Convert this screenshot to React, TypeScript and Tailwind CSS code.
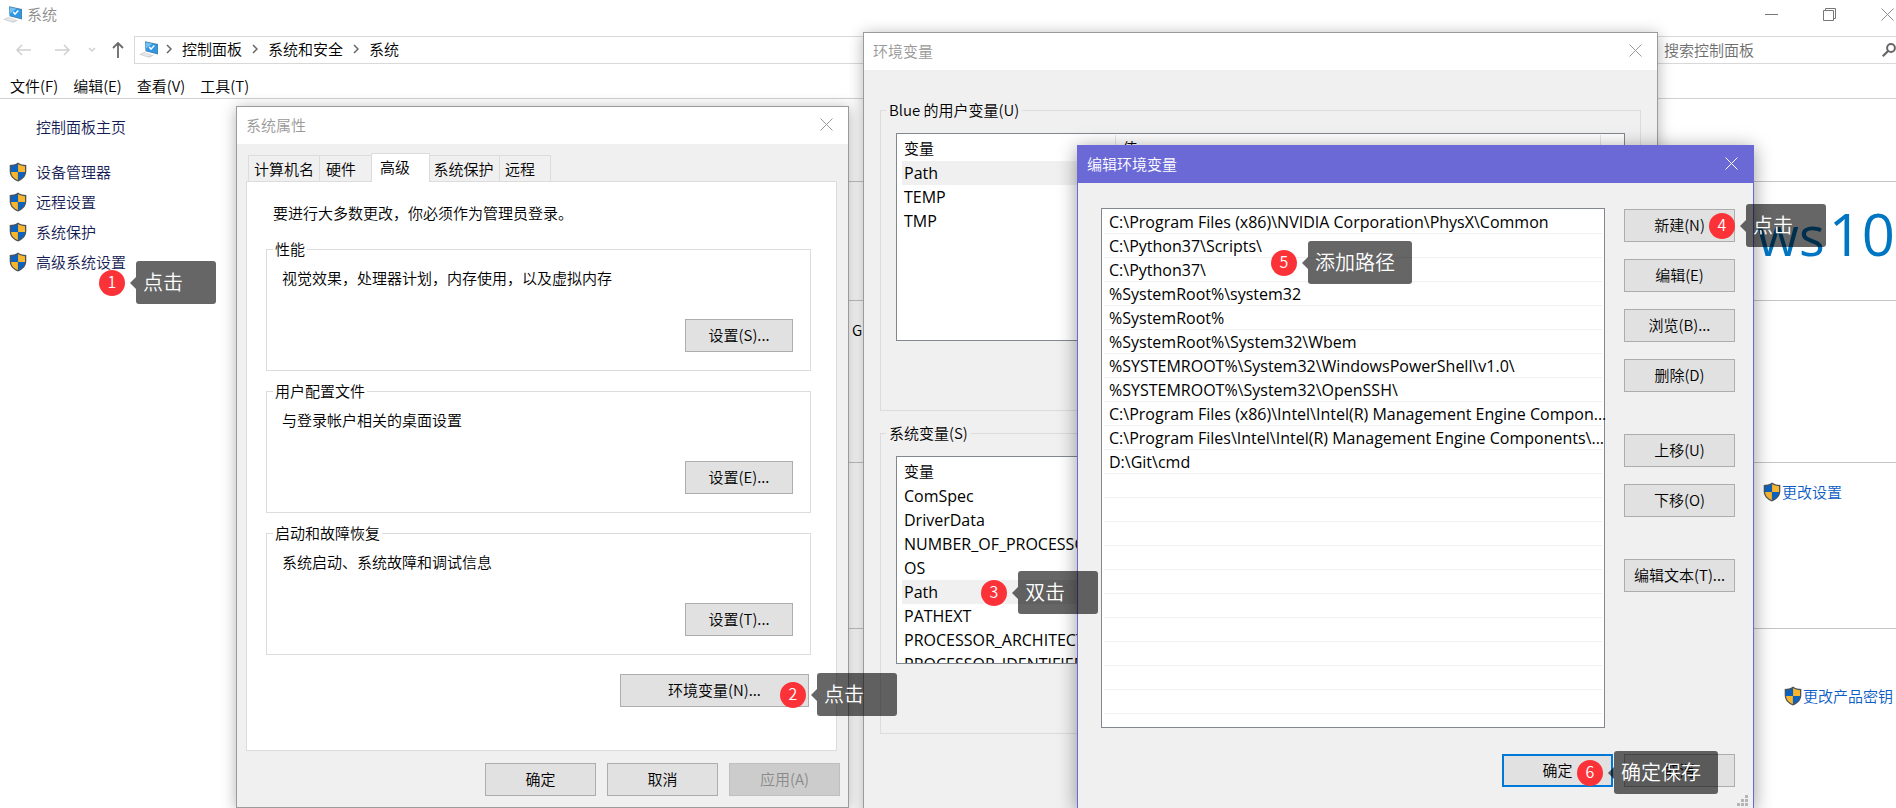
import { ReactNode } from "react";

const sideLinks = ["设备管理器", "远程设置", "系统保护", "高级系统设置"];
const menuItems = ["文件(F)", "编辑(E)", "查看(V)", "工具(T)"];
const crumbs = ["控制面板", "系统和安全", "系统"];

const groups = [
  { title: "性能", text: "视觉效果，处理器计划，内存使用，以及虚拟内存", button: "设置(S)..." },
  { title: "用户配置文件", text: "与登录帐户相关的桌面设置", button: "设置(E)..." },
  { title: "启动和故障恢复", text: "系统启动、系统故障和调试信息", button: "设置(T)..." },
];

const userVars = ["Path", "TEMP", "TMP"];
const systemVars = [
  "ComSpec",
  "DriverData",
  "NUMBER_OF_PROCESSORS",
  "OS",
  "Path",
  "PATHEXT",
  "PROCESSOR_ARCHITECTURE",
  "PROCESSOR_IDENTIFIER",
];

const paths = [
  "C:\\Program Files (x86)\\NVIDIA Corporation\\PhysX\\Common",
  "C:\\Python37\\Scripts\\",
  "C:\\Python37\\",
  "%SystemRoot%\\system32",
  "%SystemRoot%",
  "%SystemRoot%\\System32\\Wbem",
  "%SYSTEMROOT%\\System32\\WindowsPowerShell\\v1.0\\",
  "%SYSTEMROOT%\\System32\\OpenSSH\\",
  "C:\\Program Files (x86)\\Intel\\Intel(R) Management Engine Compon...",
  "C:\\Program Files\\Intel\\Intel(R) Management Engine Components\\...",
  "D:\\Git\\cmd",
];
const emptyRows = Array.from({ length: 10 }, (_, i) => i);

const steps = [
  { n: 1, text: "点击", place: "left-[99px] top-[261px]" },
  { n: 2, text: "点击", place: "left-[780px] top-[673px]" },
  { n: 3, text: "双击", place: "left-[981px] top-[571px]" },
  { n: 4, text: "点击", place: "left-[1709px] top-[204px]" },
  { n: 5, text: "添加路径", place: "left-[1271px] top-[241px]" },
  { n: 6, text: "确定保存", place: "left-[1577px] top-[751px]" },
];

const Shield = () => (
  <svg viewBox="0 0 18 20" className="w-[18px] h-5 shrink-0">
    <path d="M9 .5 C6.500 2.300 3.500 3 .7 3 V9 C.7 14 4 17.500 9 19.500 C14 17.500 17.300 14 17.300 9 V3 C14.500 3 11.500 2.300 9 .5Z" fill="#4d5358" />
    <path d="M8.900 2 C6.800 3.400 4.500 4.100 2 4.200 V10 H8.900Z" fill="#0d62bf" />
    <path d="M9.100 2 C11.200 3.400 13.500 4.100 16 4.200 V10 H9.100Z" fill="#f8b62c" />
    <path d="M2 10 C2.400 13.800 4.900 16.500 8.900 18.200 V10Z" fill="#f8b62c" />
    <path d="M16 10 C15.600 13.800 13.100 16.500 9.100 18.200 V10Z" fill="#0d62bf" />
  </svg>
);

const Computer = () => (
  <svg viewBox="0 0 20 17" className="w-5 h-[17px] shrink-0">
    <path d="M0 13.500 L5 11 L15 14.500 L10 16.800Z" fill="#cfd1d3" />
    <path d="M2 13.300 L5.500 11.800 L12.500 14.300 L9.500 15.600Z" fill="#e6e8ea" />
    <path d="M6 .3 L19 3 V13.500 L6.500 10.200Z" fill="#4a7fa5" />
    <path d="M6.600 1.200 L18.300 3.700 V12.600 L7 9.600Z" fill="#2f97e4" />
    <path d="M6.600 1.200 L13.500 2.700 L7 7.500Z" fill="#74c2f5" />
    <path d="M10.300 6 L12 8.200 L15.300 4.600" stroke="#fff" strokeWidth="1.500" fill="none" />
  </svg>
);

const Cross = () => (
  <svg viewBox="0 0 13 13" className="w-[13px] h-[13px]" stroke="currentColor" fill="none">
    <path d="M.5 .5 L12.500 12.500 M12.500 .5 L.5 12.500" />
  </svg>
);

const Chevron = () => (
  <svg viewBox="0 0 6 10" className="w-[6px] h-[10px]" stroke="#666" strokeWidth="1.500" fill="none">
    <path d="M1 1 L5 5 L1 9" />
  </svg>
);

const Button = ({ children, className = "w-[111px] border-[#adadad]", disabled = false }: { children: ReactNode; className?: string; disabled?: boolean }) => (
  <button
    disabled={disabled}
    className={`h-[33px] shrink-0 border bg-[#e1e1e1] pb-0.5 disabled:bg-[#cccccc] disabled:text-[#8a8a8a] ${className}`}
  >
    {children}
  </button>
);

const TitleBar = ({ title, className }: { title: string; className: string }) => (
  <header className={`flex h-[37px] shrink-0 items-center justify-between pb-0.5 pl-[9px] pr-[15px] ${className}`}>
    <h2>{title}</h2>
    <button aria-label="关闭">
      <Cross />
    </button>
  </header>
);

const VarTable = ({ rows }: { rows: string[] }) => (
  <div className="h-[208px] overflow-hidden border border-[#828790] bg-white pl-[5px] pr-[23px] pt-px">
    <table className="w-full table-fixed text-left">
      <thead>
        <tr className="h-[26px]">
          <th className="w-[213px] border-r border-[#e5e5e5] pl-[2px] font-[350]">变量</th>
          <th className="border-r border-[#e5e5e5] pl-[7px] font-[350]">值</th>
        </tr>
      </thead>
      <tbody>
        {rows.map((row) => (
          <tr key={row} className={`h-6 ${row === "Path" ? "bg-[#f0f0f0]" : ""}`}>
            <td className="overflow-hidden whitespace-nowrap pl-[2px] font-['Open_Sans'] text-base leading-6 font-[380]">{row}</td>
            <td />
          </tr>
        ))}
      </tbody>
    </table>
  </div>
);

const VarGroup = ({ title, rows }: { title: string; rows: string[] }) => (
  <fieldset className="h-[313px] border border-[#dcdcdc] px-[15px]">
    <legend className="-ml-[10px] px-[3px] leading-6">{title}</legend>
    <div className="pt-[11px]">
      <VarTable rows={rows} />
    </div>
  </fieldset>
);

const SystemWindow = () => (
  <main className="flex min-h-screen flex-col bg-white">
    <header className="flex h-[30px] items-center justify-between pb-0.5 pl-[3px] pr-[2px] text-[#8c8c8c]">
      <div className="flex items-center gap-1">
        <Computer />
        <h1>系统</h1>
      </div>
      <div className="flex items-center gap-[45px]">
        <button aria-label="最小化">
          <svg viewBox="0 0 13 13" className="w-[13px] h-[13px]" stroke="#777">
            <path d="M0 6.500 H13" />
          </svg>
        </button>
        <button aria-label="还原">
          <svg viewBox="0 0 13 13" className="w-[13px] h-[13px]" stroke="#777" fill="none">
            <path d="M.5 2.500 H10.500 V12.500 H.5Z M2.500 2.500 V.5 H12.500 V10.500 H10.500" />
          </svg>
        </button>
        <button aria-label="关闭">
          <Cross />
        </button>
      </div>
    </header>
    <nav className="mt-[6px] flex h-7 items-center">
      <div className="flex w-[134px] items-center pl-4">
        <svg viewBox="0 0 112 16" className="w-28 h-4" fill="none" strokeWidth="1.500">
          <path d="M15 8 H1 M6 3 L1 8 L6 13" stroke="#d0d0d0" />
          <path d="M39 8 H53 M48 3 L53 8 L48 13" stroke="#d0d0d0" />
          <path d="M73 6 L76 9 L79 6" stroke="#d0d0d0" />
          <path d="M102 16 V1 M97 6 L102 1 L107 6" stroke="#6a6a6a" strokeWidth="1.800" />
        </svg>
      </div>
      <div className="flex h-7 flex-1 items-center gap-[10px] border border-[#d9d9d9] pb-0.5 pl-1">
        <Computer />
        {crumbs.map((crumb, i) => (
          <div key={crumb} className={`flex items-center gap-[10px] ${i === 0 ? "-ml-[3px]" : ""}`}>
            <Chevron />
            <a href="#">{crumb}</a>
          </div>
        ))}
      </div>
      <label className="flex h-7 w-[249px] items-center border-y border-[#d9d9d9] pl-[17px]">
        <input placeholder="搜索控制面板" className="min-w-0 flex-1 outline-none placeholder:text-[#6d6d6d]" />
        <svg viewBox="0 0 14 14" className="w-[14px] h-[14px]" stroke="#666" fill="none">
          <circle cx="9" cy="5" r="3.900" strokeWidth="2" />
          <path d="M6.300 7.700 L.8 13.200" strokeWidth="2.200" />
        </svg>
      </label>
    </nav>
    <ul className="flex h-[35px] items-center gap-[15px] border-b border-[#d0d0d0] px-[10px] pt-[9px]">
      {menuItems.map((item) => (
        <li key={item}>{item}</li>
      ))}
    </ul>
    <div className="flex flex-1">
      <aside className="flex w-[236px] flex-col pl-9 text-[#151c55]">
        <a href="#" className="mt-4 leading-6">控制面板主页</a>
        <ul className="-ml-[27px] mt-[18px]">
          {sideLinks.map((link) => (
            <li key={link}>
              <a href="#" className="flex h-[30px] items-center gap-[9px]">
                <Shield />
                {link}
              </a>
            </li>
          ))}
        </ul>
      </aside>
      <div className="flex flex-1 flex-col">
        <section className="h-[83px] border-b border-[#c4c4c4]" />
        <section className="flex h-[119px] items-center justify-end border-b border-[#c4c4c4] pb-[14px] pr-px">
          <p className="flex items-baseline gap-1 font-['Open_Sans'] text-[54px] leading-none font-normal text-[#0075c2]">
            <span>Windows</span>
            <span className="text-[58px]">10</span>
          </p>
        </section>
        <section className="h-[162px] border-b border-[#c4c4c4] pl-[616px] pt-[17px]">
          <p className="leading-6">G</p>
        </section>
        <section className="flex h-[166px] justify-end border-b border-[#c4c4c4] pr-[54px] pt-[19px] text-[#0b5cc4]">
          <a href="#" className="flex h-5 items-center gap-px">
            <Shield />
            更改设置
          </a>
        </section>
        <section className="flex justify-end pr-[3px] pt-[57px] text-[#0b5cc4]">
          <a href="#" className="flex h-5 items-center gap-px">
            <Shield />
            更改产品密钥
          </a>
        </section>
      </div>
    </div>
  </main>
);

const PropertiesDialog = () => (
  <section className="absolute left-[236px] top-[106px] flex h-[702px] w-[613px] flex-col border border-[#9b9b9b] bg-[#f0f0f0] shadow-[0_2px_14px_rgba(0,0,0,0.3)]">
    <TitleBar title="系统属性" className="bg-white text-[#999]" />
    <div className="mt-[9px] flex h-7 shrink-0 items-end pl-[11px]">
      <button className="h-[26px] w-[72px] border border-b-0 border-[#dcdcdc]">计算机名</button>
      <button className="h-[26px] w-[51px] border-t border-[#dcdcdc] pl-[6px] text-left">硬件</button>
      <button className="z-10 -mb-px h-[29px] w-[59px] border border-b-0 border-[#dcdcdc] bg-white pl-2 pb-[3px] text-left">高级</button>
      <button className="h-[26px] w-[70px] border-t border-r border-[#dcdcdc] pr-[2px]">系统保护</button>
      <button className="h-[26px] w-[51px] border-t border-r border-[#dcdcdc] pl-[5px] text-left">远程</button>
    </div>
    <div className="ml-[9px] mr-[11px] flex h-[570px] shrink-0 flex-col border border-[#dcdcdc] bg-white pl-[19px] pr-[25px]">
      <p className="mt-[19px] pl-[7px] leading-6">要进行大多数更改，你必须作为管理员登录。</p>
      <div className="mt-3 flex flex-col gap-2">
        {groups.map((group) => (
          <fieldset key={group.title} className="flex h-[134px] flex-col border border-[#dcdcdc] pl-[15px] pr-[17px]">
            <legend className="-ml-[9px] px-[2px] leading-6">{group.title}</legend>
            <p className="mt-[5px] leading-6">{group.text}</p>
            <Button className="mt-[29px] ml-auto block w-[108px] border-[#adadad]">{group.button}</Button>
          </fieldset>
        ))}
      </div>
      <Button className="mt-[19px] mr-[2px] self-end w-[189px] border-[#adadad]">环境变量(N)...</Button>
    </div>
    <footer className="mt-3 flex justify-end gap-[11px] pr-2">
      <Button>确定</Button>
      <Button>取消</Button>
      <Button disabled className="w-[111px] border-[#bfbfbf]">应用(A)</Button>
    </footer>
  </section>
);

const VariablesDialog = () => (
  <section className="absolute left-[863px] top-8 flex h-[820px] w-[795px] flex-col border border-[#9b9b9b] bg-[#f0f0f0] shadow-[0_2px_14px_rgba(0,0,0,0.3)]">
    <TitleBar title="环境变量" className="bg-white text-[#999]" />
    <div className="flex flex-col gap-[10px] px-4 pt-7">
      <VarGroup title="Blue 的用户变量(U)" rows={userVars} />
      <VarGroup title="系统变量(S)" rows={systemVars} />
    </div>
  </section>
);

const EditDialog = () => (
  <section className="absolute left-[1077px] top-[145px] flex h-[664px] w-[677px] flex-col border border-[#6b69d6] bg-[#f0f0f0] shadow-[0_3px_18px_rgba(0,0,0,0.4)]">
    <TitleBar title="编辑环境变量" className="bg-[#6b69d6] text-white" />
    <div className="flex gap-[19px] pl-[23px] pr-[18px] pt-[25px]">
      <ul className="h-[520px] min-w-0 flex-1 border border-[#828790] bg-white px-[2px] pt-px font-['Open_Sans'] text-base font-[380]">
        {paths.map((path) => (
          <li key={path} className="h-6 whitespace-nowrap border-b border-[#f0f0f0] pl-[5px] leading-6">{path}</li>
        ))}
        {emptyRows.map((row) => (
          <li key={row} className="h-6 border-b border-[#f0f0f0]" />
        ))}
      </ul>
      <div className="flex flex-col gap-[17px] pt-px">
        <Button>新建(N)</Button>
        <Button>编辑(E)</Button>
        <Button>浏览(B)...</Button>
        <Button>删除(D)</Button>
        <div className="flex flex-col gap-[17px] py-[25px]">
          <Button>上移(U)</Button>
          <Button>下移(O)</Button>
        </div>
        <Button>编辑文本(T)...</Button>
      </div>
    </div>
    <footer className="mt-[26px] flex justify-end gap-[11px] pr-[18px]">
      <Button className="w-[111px] border-2 border-[#0078d7]">确定</Button>
      <Button>取消</Button>
    </footer>
    <svg viewBox="0 0 12 12" className="absolute bottom-px right-1 w-3 h-3" fill="#b5b5b5">
      <path d="M8 0h3v3h-3z M4 4h3v3h-3z M8 4h3v3h-3z M0 8h3v3h-3z M4 8h3v3h-3z M8 8h3v3h-3z" />
    </svg>
  </section>
);

export default function App() {
  return (
    <div className="relative h-screen min-h-[808px] overflow-hidden font-['Noto_Sans_CJK_SC',sans-serif] text-[15px] leading-5 font-[350] text-black">
      <SystemWindow />
      <PropertiesDialog />
      <VariablesDialog />
      <EditDialog />
      {steps.map((step) => (
        <div key={step.n} className={`absolute flex items-center text-white ${step.place}`}>
          <span className="flex size-[26px] items-center justify-center rounded-full bg-[#fb3338] pb-[3px] text-base">{step.n}</span>
          <span className="ml-[5px] border-y-[6px] border-r-[6px] border-y-transparent border-r-black/60" />
          <span className="h-[43px] min-w-20 rounded-[3px] bg-black/60 pl-[7px] pr-[17px] text-xl leading-[42px]">{step.text}</span>
        </div>
      ))}
    </div>
  );
}
